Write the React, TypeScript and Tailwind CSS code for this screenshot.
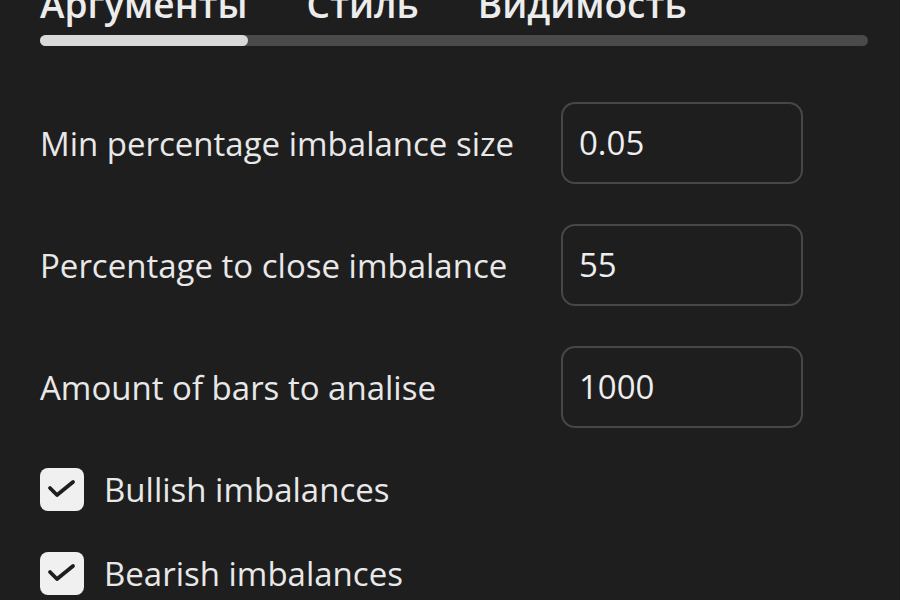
import React from "react";

const font = { fontFamily: '"Open Sans", "Noto Sans", sans-serif' };

function Row({ label, value }: { label: string; value: string }) {
  return (
    <div className="flex items-center h-[82px]">
      <div className="w-[521px] text-[33px] text-[#e8e8e8] leading-none">{label}</div>
      <div className="w-[242px] h-[82px] rounded-[14px] border-2 border-[#474747] flex items-center pl-[16px] text-[33px] text-[#eeeeee]">
        {value}
      </div>
    </div>
  );
}

function Check({ label }: { label: string }) {
  return (
    <div className="flex items-center h-[44px]">
      <div className="w-[44px] h-[43px] rounded-[8px] bg-[#f0f0f0]">
        <svg width="44" height="43" viewBox="0 0 44 43" fill="none">
          <path d="M10 20 L17 27 L33 14" stroke="#1e1e1e" strokeWidth="3.8" strokeLinecap="round" strokeLinejoin="round" />
        </svg>
      </div>
      <div className="ml-[20px] text-[33px] text-[#e8e8e8] leading-none">{label}</div>
    </div>
  );
}

export default function App() {
  return (
    <div className="w-[900px] h-[600px] bg-[#1e1e1e] overflow-hidden pl-[40px] pr-[32px]" style={font}>
      <div className="flex gap-[59px] text-[37px] font-semibold text-[#ececec] leading-none mt-[-15px] h-[30px]">
        <span>Аргументы</span>
        <span>Стиль</span>
        <span>Видимость</span>
      </div>
      <div className="mt-[20px] h-[11px] rounded-full bg-[#4a4a4a] flex">
        <div className="w-[208px] h-full rounded-full bg-[#d9d9d9]" />
      </div>
      <div className="mt-[56px] flex flex-col gap-[40px]">
        <Row label="Min percentage imbalance size" value="0.05" />
        <Row label="Percentage to close imbalance" value="55" />
        <Row label="Amount of bars to analise" value="1000" />
      </div>
      <div className="mt-[39px] flex flex-col gap-[40px]">
        <Check label="Bullish imbalances" />
        <Check label="Bearish imbalances" />
      </div>
    </div>
  );
}
